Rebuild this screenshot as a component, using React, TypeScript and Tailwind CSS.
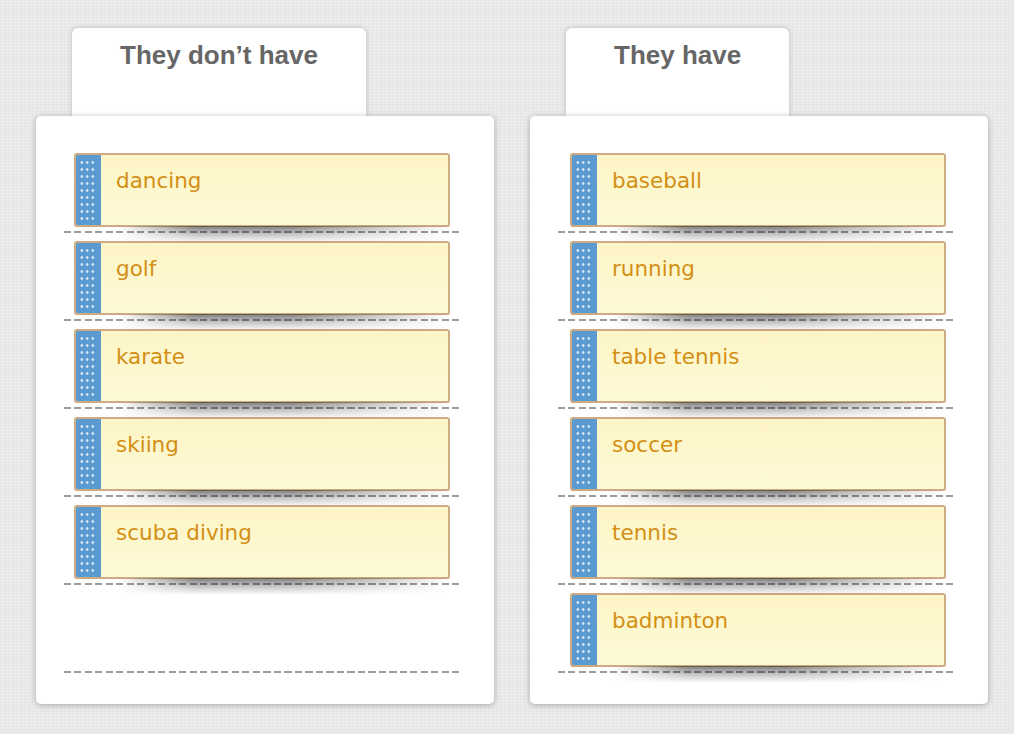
const dontHave = ['dancing', 'golf', 'karate', 'skiing', 'scuba diving'];
const have = ['baseball', 'running', 'table tennis', 'soccer', 'tennis', 'badminton'];

function Slot({ label, right }: { label?: string; right?: boolean }) {
  return (
    <div className="relative h-[88px]">
      {label ? (
        <>
          <div className="pointer-events-none absolute left-[55px] top-[73px] z-20 h-[17px] w-[345px] bg-[linear-gradient(180deg,rgba(0,0,0,0.5),rgba(0,0,0,0.22)_50%,transparent)] [mask-image:linear-gradient(90deg,transparent,black_22%,black_50%,transparent_96%)]" />
          <div className={`relative z-10 flex h-[74px] w-[376px] overflow-hidden rounded-[3px] border-2 border-[#cdac82] bg-[linear-gradient(180deg,#fdf5c6,#fefad8)] ${right ? 'ml-[12px]' : 'ml-[10px]'}`}>
            <div className="flex w-[25px] shrink-0 bg-[#5b9ad0]">
              <div className="my-[4px] ml-[3px] w-[17px] bg-[radial-gradient(circle,rgba(255,255,255,0.8)_1px,transparent_1.6px)] bg-[length:5.5px_7px]" />
            </div>
            <div className="pl-[15px] pt-[13px] font-['DejaVu_Sans',sans-serif] text-[21.5px] leading-[25px] text-[#d38f14]">
              {label}
            </div>
          </div>
        </>
      ) : (
        <div className="h-[74px]" />
      )}
      <div className="mt-[4px] h-[2px] w-[399px] bg-[repeating-linear-gradient(90deg,#9c9c9c_0_7px,transparent_7px_10.5px)]" />
    </div>
  );
}

function Column({ title, items, right }: { title: string; items: string[]; right?: boolean }) {
  const rows = Array.from({ length: 6 }, (_, i) => items[i]);
  return (
    <div className="flex w-[458px] flex-col">
      <div className="ml-[36px] h-[88px] self-start rounded-t-[6px] bg-white px-12 pt-[12px] shadow-[0_0_5px_rgba(0,0,0,0.22)]">
        <h2 className="font-['Liberation_Sans',Arial,sans-serif] text-[26px] font-bold leading-[30px] text-[#666666]">
          {title}
        </h2>
      </div>
      <div className="relative z-10 rounded-[5px] bg-white pb-[23px] pl-[28px] pt-[37px] shadow-[0_1px_6px_rgba(0,0,0,0.28)]">
        {rows.map((label, i) => (
          <Slot key={i} label={label} right={right} />
        ))}
      </div>
    </div>
  );
}

export default function App() {
  return (
    <div className="h-[734px] w-[1014px] overflow-hidden bg-[#e9e9e9] bg-[repeating-linear-gradient(0deg,rgba(255,255,255,0.2)_0_1px,transparent_1px_3px),repeating-linear-gradient(90deg,rgba(0,0,0,0.025)_0_1px,transparent_1px_4px)]">
      <div className="flex gap-[36px] pl-[36px] pt-[28px]">
        <Column title="They don’t have" items={dontHave} />
        <Column title="They have" items={have} right />
      </div>
    </div>
  );
}
